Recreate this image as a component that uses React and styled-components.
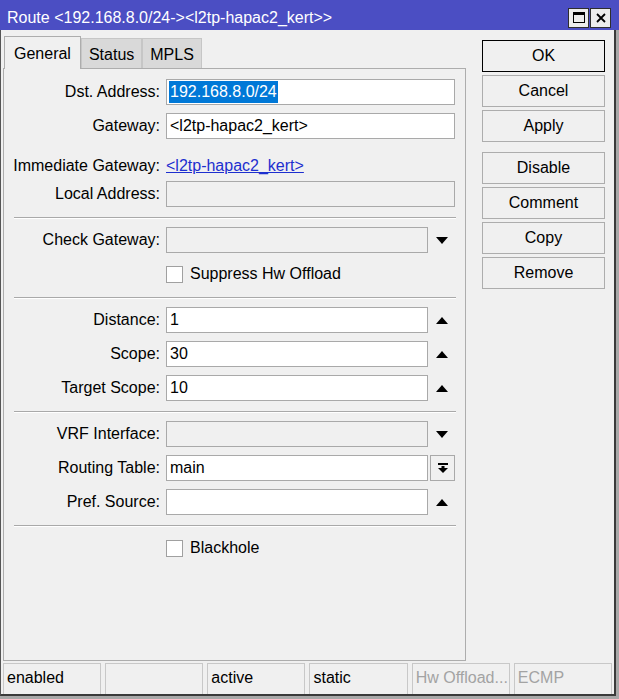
import React from "react";
import styled, { createGlobalStyle } from "styled-components";

const GlobalStyle = createGlobalStyle`
	html, body {
		margin: 0;
		padding: 0;
		background: #ffffff;
	}
	* {
		box-sizing: border-box;
	}
	body {
		font-family: "Liberation Sans", Arial, sans-serif;
		color: #000;
	}
`;

const Caret = ({ up }) => (
	<svg width="12" height="7" viewBox="0 0 12 7">
		{up ? <polygon points="0,7 12,7 6,0" fill="#000" /> : <polygon points="0,0 12,0 6,7" fill="#000" />}
	</svg>
);

const DropIcon = () => (
	<svg width="10" height="10" viewBox="0 0 10 10">
		<rect x="0" y="0" width="10" height="2" fill="#000" />
		<rect x="3.5" y="3" width="3" height="2" fill="#000" />
		<polygon points="0,5 10,5 5,10" fill="#000" />
	</svg>
);

const App = () => {
	return (
		<>
			<GlobalStyle />
			<Window>
				<TitleBar>
					<Title>Route &lt;192.168.8.0/24-&gt;&lt;l2tp-hapac2_kert&gt;&gt;</Title>
					<TitleButtons>
						<TitleButton>
							<svg width="12" height="11" viewBox="0 0 12 11">
								<rect x="0.5" y="0.5" width="11" height="10" fill="none" stroke="#000" />
								<rect x="0" y="0" width="12" height="3" fill="#000" />
							</svg>
						</TitleButton>
						<TitleButton>
							<svg width="10" height="10" viewBox="0 0 10 10">
								<path d="M1 1 L9 9 M9 1 L1 9" stroke="#000" strokeWidth="1.8" />
							</svg>
						</TitleButton>
					</TitleButtons>
				</TitleBar>
				<Frame>
					<Inner>
						<Body>
							<LeftCol>
								<TabBar>
									<Tab active>General</Tab>
									<Tab>Status</Tab>
									<Tab>MPLS</Tab>
								</TabBar>
								<Panel>
									<Row>
										<Label>Dst. Address:</Label>
										<FieldWrap>
											<Input>
												<Selected>192.168.8.0/24</Selected>
											</Input>
										</FieldWrap>
									</Row>
									<Row>
										<Label>Gateway:</Label>
										<FieldWrap>
											<Input>&lt;l2tp-hapac2_kert&gt;</Input>
										</FieldWrap>
									</Row>
									<LinkRow>
										<Label>Immediate Gateway:</Label>
										<LinkText>&lt;l2tp-hapac2_kert&gt;</LinkText>
									</LinkRow>
									<Row>
										<Label>Local Address:</Label>
										<FieldWrap>
											<Input readOnly />
										</FieldWrap>
									</Row>
									<Separator />
									<Row>
										<Label>Check Gateway:</Label>
										<FieldWrap>
											<Input readOnly />
											<ArrowCell>
												<Caret />
											</ArrowCell>
										</FieldWrap>
									</Row>
									<Row>
										<span />
										<CheckRow>
											<CheckBox />
											<span>Suppress Hw Offload</span>
										</CheckRow>
									</Row>
									<Separator />
									<Row>
										<Label>Distance:</Label>
										<FieldWrap>
											<Input>1</Input>
											<ArrowCell>
												<Caret up />
											</ArrowCell>
										</FieldWrap>
									</Row>
									<Row>
										<Label>Scope:</Label>
										<FieldWrap>
											<Input>30</Input>
											<ArrowCell>
												<Caret up />
											</ArrowCell>
										</FieldWrap>
									</Row>
									<Row>
										<Label>Target Scope:</Label>
										<FieldWrap>
											<Input>10</Input>
											<ArrowCell>
												<Caret up />
											</ArrowCell>
										</FieldWrap>
									</Row>
									<Separator />
									<Row>
										<Label>VRF Interface:</Label>
										<FieldWrap>
											<Input readOnly />
											<ArrowCell>
												<Caret />
											</ArrowCell>
										</FieldWrap>
									</Row>
									<Row>
										<Label>Routing Table:</Label>
										<FieldWrap>
											<Input>main</Input>
											<DropButton>
												<DropIcon />
											</DropButton>
										</FieldWrap>
									</Row>
									<Row>
										<Label>Pref. Source:</Label>
										<FieldWrap>
											<Input />
											<ArrowCell>
												<Caret up />
											</ArrowCell>
										</FieldWrap>
									</Row>
									<Separator />
									<Row>
										<span />
										<CheckRow>
											<CheckBox />
											<span>Blackhole</span>
										</CheckRow>
									</Row>
								</Panel>
							</LeftCol>
							<ButtonCol>
								<Button primary>OK</Button>
								<Button>Cancel</Button>
								<Button>Apply</Button>
								<Button spaced>Disable</Button>
								<Button>Comment</Button>
								<Button>Copy</Button>
								<Button>Remove</Button>
							</ButtonCol>
						</Body>
						<StatusBar>
							<StatusCell>enabled</StatusCell>
							<StatusCell />
							<StatusCell>active</StatusCell>
							<StatusCell>static</StatusCell>
							<StatusCell muted>Hw Offload...</StatusCell>
							<StatusCell muted>ECMP</StatusCell>
						</StatusBar>
					</Inner>
				</Frame>
			</Window>
		</>
	);
};

export default App;

const Window = styled.div`
	width: 619px;
	height: 699px;
	display: flex;
	flex-direction: column;
	font-size: 16px;
`;

const TitleBar = styled.div`
	height: 30px;
	flex: none;
	display: flex;
	align-items: center;
	padding: 5px 8px 0 7px;
	background: #4b4ec3;
	color: #ffffff;
	font-size: 16px;
`;

const Title = styled.div`
	flex: 1;
	white-space: nowrap;
`;

const TitleButtons = styled.div`
	display: flex;
	gap: 1px;
`;

const TitleButton = styled.div`
	width: 21px;
	height: 20px;
	display: flex;
	align-items: center;
	justify-content: center;
	background: #ececec;
	border: 1px solid #2e2e2e;
`;

const Frame = styled.div`
	flex: 1;
	display: flex;
	flex-direction: column;
	padding: 0 3px 3px 0;
	background: #a8a8a8;
`;

const Inner = styled.div`
	flex: 1;
	display: flex;
	flex-direction: column;
	background: #f0f0f0;
	border-left: 1px solid #555555;
	border-right: 2px solid #3a3a3a;
	border-bottom: 2px solid #3a3a3a;
`;

const Body = styled.div`
	height: 633px;
	flex: none;
	display: flex;
	gap: 16px;
	padding: 6px 9px 2px 2px;
`;

const LeftCol = styled.div`
	width: 463px;
	display: flex;
	flex-direction: column;
`;

const TabBar = styled.div`
	height: 32px;
	flex: none;
	display: flex;
	align-items: flex-end;
	padding-left: 1px;
`;

const Tab = styled.div`
	position: relative;
	display: flex;
	align-items: center;
	height: ${(p) => (p.active ? "33px" : "30px")};
	margin-bottom: ${(p) => (p.active ? "-1px" : "0")};
	padding: ${(p) => (p.active ? "2px 9px 0" : "2px 7px 0")};
	background: ${(p) => (p.active ? "#f0f0f0" : "#d9d9d9")};
	border: 1px solid ${(p) => (p.active ? "#adadad" : "#c6c6c6")};
	border-bottom: none;
	z-index: ${(p) => (p.active ? 1 : 0)};
	white-space: nowrap;
`;

const Panel = styled.div`
	flex: 1;
	display: flex;
	flex-direction: column;
	gap: 8px;
	padding: 10px 9px 0 0;
	border: 1px solid #adadad;
	background: #f0f0f0;
`;

const Row = styled.div`
	height: 26px;
	flex: none;
	display: grid;
	grid-template-columns: 156px 289px;
	column-gap: 6px;
	align-items: center;
`;

const LinkRow = styled(Row)`
	align-items: start;
	padding-top: 9px;
	line-height: 20px;
`;

const Label = styled.div`
	text-align: right;
	white-space: nowrap;
`;

const LinkText = styled.div`
	color: #1d2fcf;
	text-decoration: underline;
	white-space: nowrap;
`;

const FieldWrap = styled.div`
	height: 26px;
	display: flex;
`;

const Input = styled.div`
	flex: 1;
	height: 26px;
	display: flex;
	align-items: center;
	padding-left: 3px;
	border: 1px solid #a9a9a9;
	background: ${(p) => (p.readOnly ? "#f0f0f0" : "#ffffff")};
	white-space: nowrap;
`;

const Selected = styled.span`
	margin-left: -1px;
	padding: 0 1px;
	line-height: 22px;
	background: #0078d7;
	color: #ffffff;
`;

const ArrowCell = styled.div`
	width: 27px;
	display: flex;
	align-items: center;
	justify-content: center;
`;

const DropButton = styled.div`
	width: 25px;
	margin-left: 2px;
	display: flex;
	align-items: center;
	justify-content: center;
	border: 1px solid #a9a9a9;
	background: #f0f0f0;
`;

const Separator = styled.div`
	height: 2px;
	flex: none;
	margin: 2px 0 0 10px;
	border-top: 1px solid #a9a9a9;
	border-bottom: 1px solid #ffffff;
`;

const CheckRow = styled.div`
	display: flex;
	align-items: center;
	gap: 7px;
	white-space: nowrap;
`;

const CheckBox = styled.div`
	width: 17px;
	height: 17px;
	border: 1px solid #a0a0a0;
	background: #ffffff;
`;

const ButtonCol = styled.div`
	width: 123px;
	display: flex;
	flex-direction: column;
	gap: 3px;
	padding-top: 4px;
`;

const Button = styled.div`
	height: 32px;
	display: flex;
	align-items: center;
	justify-content: center;
	margin-top: ${(p) => (p.spaced ? "7px" : "0")};
	border: 1px solid ${(p) => (p.primary ? "#000000" : "#adadad")};
	background: #f0f0f0;
`;

const StatusBar = styled.div`
	flex: 1;
	display: grid;
	grid-template-columns: repeat(6, 1fr);
	gap: 4px;
	padding: 0 2px;
`;

const StatusCell = styled.div`
	padding: 5px 0 0 3px;
	line-height: 18px;
	border: 1px solid #c8c8c8;
	border-bottom: none;
	color: ${(p) => (p.muted ? "#a3a3a3" : "#000000")};
	white-space: nowrap;
	overflow: hidden;
`;
